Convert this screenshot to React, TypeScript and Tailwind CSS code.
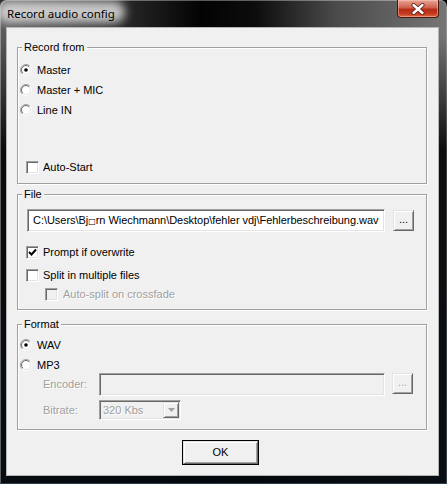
import { useId } from "react";

const sans = "font-['Liberation_Sans',Arial,sans-serif] text-[11px] leading-[13px] text-black";
const disabledText = "text-[#a0a0a0] [text-shadow:1px_1px_0_#fff]";

// classic 3D edges
const sunken =
  "border border-t-[#a0a0a0] border-l-[#a0a0a0] border-r-white border-b-white shadow-[inset_1px_1px_0_#696969,inset_-1px_-1px_0_#e3e3e3]";
const raised =
  "border border-t-[#e3e3e3] border-l-[#e3e3e3] border-r-[#696969] border-b-[#696969] shadow-[inset_1px_1px_0_#fff,inset_-1px_-1px_0_#a0a0a0]";

function Radio({ checked }: { checked?: boolean }) {
  const id = useId();
  return (
    <svg width="12" height="12" viewBox="0 0 12 12" className="flex-shrink-0">
      <defs>
        <linearGradient id={`${id}o`} x1="0" y1="0" x2="1" y2="1">
          <stop offset="0.45" stopColor="#a0a0a0" />
          <stop offset="0.55" stopColor="#ffffff" />
        </linearGradient>
        <linearGradient id={`${id}i`} x1="0" y1="0" x2="1" y2="1">
          <stop offset="0.45" stopColor="#696969" />
          <stop offset="0.55" stopColor="#e3e3e3" />
        </linearGradient>
      </defs>
      <circle cx="6" cy="6" r="5.5" fill="none" stroke={`url(#${id}o)`} />
      <circle cx="6" cy="6" r="4.5" fill="#fff" stroke={`url(#${id}i)`} />
      {checked && <circle cx="6" cy="6" r="1.8" fill="#000" />}
    </svg>
  );
}

function Checkbox({ checked, disabled }: { checked?: boolean; disabled?: boolean }) {
  return (
    <span
      className={`w-[13px] h-[13px] flex-shrink-0 flex items-center justify-center ${sunken} ${
        disabled ? "bg-[#f0f0f0]" : "bg-white"
      }`}
    >
      {checked && (
        <svg width="9" height="9" viewBox="0 0 9 9">
          <path d="M1 4 L3.5 6.5 L8 1.5" fill="none" stroke="#000" strokeWidth="1.9" />
        </svg>
      )}
    </span>
  );
}

function Group({ title, className, children }: { title: string; className: string; children: React.ReactNode }) {
  return (
    <fieldset className={`border border-[#a0a0a0] shadow-[inset_1px_1px_0_#fff,1px_1px_0_#fff] ${className}`}>
      <legend className="ml-[4px] px-[2px] bg-[#f0f0f0] leading-[13px]">{title}</legend>
      {children}
    </fieldset>
  );
}

function DotsButton({ disabled }: { disabled?: boolean }) {
  return (
    <button
      className={`w-[21px] h-[21px] flex items-center justify-center bg-[#f0f0f0] leading-none pb-[3px] ${raised} ${
        disabled ? disabledText : ""
      }`}
    >
      ...
    </button>
  );
}

export default function App() {
  return (
    <div className="w-[447px] h-[484px] bg-black">
      <div
        className={`${sans} w-[447px] h-[484px] rounded-t-[7px] flex flex-col border-b border-b-[#27404d] shadow-[inset_1px_1px_0_rgba(255,255,255,0.35),inset_-1px_0_0_rgba(255,255,255,0.2)] bg-[linear-gradient(180deg,rgba(0,0,0,0)_0px,rgba(0,0,0,0)_35px,rgba(0,0,0,0.88)_150px,rgba(3,8,14,0.95)_100%),linear-gradient(90deg,#5c5c5c_0%,#343434_22%,#030303_45%,#0c0c0c_57%,#4a4a4a_75%,#767676_100%)]`}
      >
        {/* title bar */}
        <div className="h-[27px] flex items-start relative">
          <div className="relative mt-[6px] ml-[7px]">
            <span className="absolute -left-[10px] -top-[5px] w-[128px] h-[22px] rounded-full bg-[rgba(225,225,225,0.85)] blur-[5px]" />
            <span className="relative font-['Noto_Sans',sans-serif] text-[11.5px] leading-[16px] text-black">
              Record audio config
            </span>
          </div>
          <button className="ml-auto mr-[8px] mt-0 w-[42px] h-[18px] rounded-b-[4px] border border-t-0 border-[#4a1a12] bg-[linear-gradient(180deg,#e9a597_0%,#d0604c_45%,#b52d17_55%,#c43a20_80%,#e06a3c_100%)] shadow-[inset_0_0_0_1px_rgba(255,210,200,0.45)] flex items-center justify-center">
            <svg width="14" height="12" viewBox="0 0 14 12">
              <path d="M2.5 2 L11.5 10 M11.5 2 L2.5 10" stroke="#5a1d12" strokeWidth="4" strokeLinecap="round" />
              <path d="M2.5 2 L11.5 10 M11.5 2 L2.5 10" stroke="#fff" strokeWidth="2.4" strokeLinecap="round" />
            </svg>
          </button>
        </div>

        {/* client area */}
        <div className="ml-[6px] w-[433px] h-[449px] border border-[#b4b4b4] bg-[#f0f0f0] pl-[10px] flex flex-col">
          <Group title="Record from" className="mt-[13px] w-[410px] h-[143px] flex flex-col">
            <div className="mt-[6px] h-[20px] flex items-center">
              <span className="ml-[2px]"><Radio checked /></span>
              <span className="ml-[5px]">Master</span>
            </div>
            <div className="h-[20px] flex items-center">
              <span className="ml-[2px]"><Radio /></span>
              <span className="ml-[5px]">Master + MIC</span>
            </div>
            <div className="h-[20px] flex items-center">
              <span className="ml-[2px]"><Radio /></span>
              <span className="ml-[5px]">Line IN</span>
            </div>
            <div className="mt-[37px] h-[20px] flex items-center">
              <span className="ml-[8px]"><Checkbox /></span>
              <span className="ml-[4px]">Auto-Start</span>
            </div>
          </Group>

          <Group title="File" className="mt-[4px] w-[410px] h-[122px] flex flex-col">
            <div className="mt-[8px] flex items-start">
              <div className={`ml-[9px] w-[358px] h-[23px] bg-white flex items-center pl-[5px] overflow-hidden ${sunken}`}>
                <span className="whitespace-nowrap tracking-[-0.04px]">
                  C:\Users\Bj<span className="font-['DejaVu_Sans',sans-serif] text-[8px]">□</span>rn Wiechmann\Desktop\fehler vdj\Fehlerbeschreibung.wav
                </span>
              </div>
              <div className="ml-[8px] mt-[1px]">
                <DotsButton />
              </div>
            </div>
            <div className="mt-[10px] h-[20px] flex items-center">
              <span className="ml-[8px]"><Checkbox checked /></span>
              <span className="ml-[4px]">Prompt if overwrite</span>
            </div>
            <div className="mt-[3px] h-[20px] flex items-center">
              <span className="ml-[8px]"><Checkbox /></span>
              <span className="ml-[4px]">Split in multiple files</span>
            </div>
            <div className="mt-[1px] h-[16px] flex items-center">
              <span className="ml-[27px]"><Checkbox disabled /></span>
              <span className={`ml-[5px] ${disabledText}`}>Auto-split on crossfade</span>
            </div>
          </Group>

          <Group title="Format" className="mt-[8px] w-[410px] h-[112px] flex flex-col">
            <div className="mt-[4px] h-[20px] flex items-center">
              <span className="ml-[2px]"><Radio checked /></span>
              <span className="ml-[5px]">WAV</span>
            </div>
            <div className="h-[20px] flex items-center">
              <span className="ml-[2px]"><Radio /></span>
              <span className="ml-[5px]">MP3</span>
            </div>
            <div className="-mt-[2px] h-[23px] flex items-center">
              <span className={`ml-[25px] w-[56px] ${disabledText}`}>Encoder:</span>
              <div className={`w-[286px] h-[23px] bg-[#f0f0f0] ${sunken}`} />
              <div className="ml-[7px] self-start">
                <DotsButton disabled />
              </div>
            </div>
            <div className="mt-[4px] h-[20px] flex items-center">
              <span className={`ml-[25px] w-[56px] ${disabledText}`}>Bitrate:</span>
              <div className={`w-[82px] h-[20px] bg-[#f0f0f0] flex items-center ${sunken}`}>
                <span className={`flex-1 pl-[3px] ${disabledText}`}>320 Kbs</span>
                <span className={`w-[16px] h-[16px] mr-[1px] bg-[#f0f0f0] flex items-center justify-center ${raised}`}>
                  <svg width="7" height="4" viewBox="0 0 7 4">
                    <path d="M0 0 H7 L3.5 4 Z" fill="#a0a0a0" />
                  </svg>
                </span>
              </div>
            </div>
          </Group>

          <button
            className={`mt-[11px] ml-[166px] w-[75px] h-[23px] bg-[#f0f0f0] outline outline-1 outline-black -outline-offset-0 flex items-center justify-center ${raised}`}
          >
            OK
          </button>
        </div>
      </div>
    </div>
  );
}
